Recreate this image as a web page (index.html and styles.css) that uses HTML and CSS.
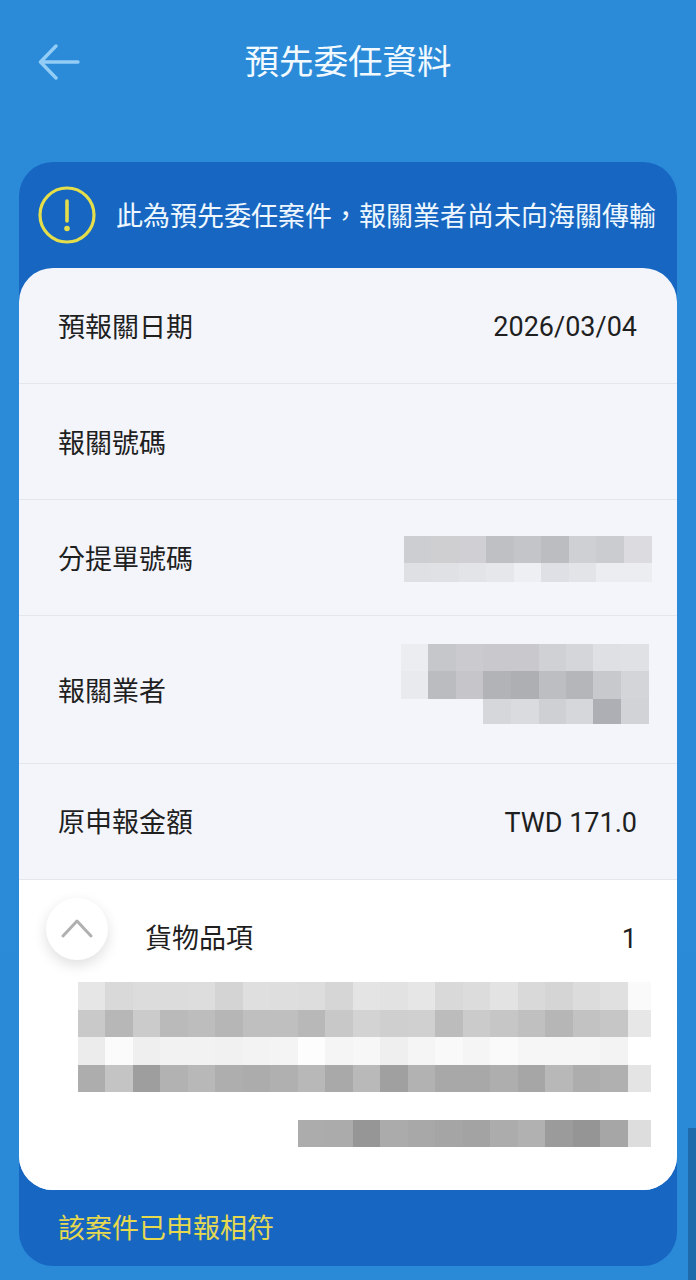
FILE: index.html
```html
<!DOCTYPE html>
<html lang="zh-Hant">
<head>
    <meta charset="UTF-8">
    <meta name="viewport" content="width=device-width, initial-scale=1.0">
    <title>預先委任資料</title>
    <link rel="stylesheet" href="styles.css">
</head>
<body>
    <header class="top-bar">
        <svg class="back-icon" width="42" height="36" viewBox="0 0 42 36" fill="none">
            <path d="M40 18H3M18 2 2.5 18 18 34" stroke="#93cdf6" stroke-width="3.4" stroke-linecap="round" stroke-linejoin="round"/>
        </svg>
        <h1 class="page-title">預先委任資料</h1>
    </header>

    <main class="case-card">
        <div class="notice">
            <svg class="notice-icon" width="58" height="58" viewBox="0 0 58 58" fill="none">
                <circle cx="29" cy="29" r="27" stroke="#e5de4b" stroke-width="3.2"/>
                <path d="M29 15v20" stroke="#e5de4b" stroke-width="3.6" stroke-linecap="round"/>
                <circle cx="29" cy="42.5" r="2.8" fill="#e5de4b"/>
            </svg>
            <p class="notice-text">此為預先委任案件，報關業者尚未向海關傳輸</p>
        </div>

        <section class="details">
            <div class="detail-row">
                <span>預報關日期</span>
                <span class="detail-value">2026/03/04</span>
            </div>
            <div class="detail-row">
                <span>報關號碼</span>
            </div>
            <div class="detail-row">
                <span>分提單號碼</span>
                <div class="mosaic mosaic-bill">
                    <div class="bill-1"></div>
                    <div class="bill-2"></div>
                </div>
            </div>
            <div class="detail-row detail-row-tall">
                <span>報關業者</span>
                <div class="mosaic mosaic-broker">
                    <div class="broker-1"></div>
                    <div class="broker-2"></div>
                    <div class="broker-3"></div>
                </div>
            </div>
            <div class="detail-row">
                <span class="amount-label">原申報金額</span>
                <span class="detail-value">TWD 171.0</span>
            </div>

            <div class="goods">
                <div class="goods-head">
                    <button class="collapse-btn" type="button" aria-label="收合">
                        <svg width="32" height="20" viewBox="0 0 32 20" fill="none">
                            <path d="M2 18 16 3l14 15" stroke="#b0b0b0" stroke-width="3" stroke-linecap="round" stroke-linejoin="round"/>
                        </svg>
                    </button>
                    <span class="goods-label">貨物品項</span>
                    <span class="goods-count">1</span>
                </div>
                <div class="mosaic mosaic-goods">
                    <div class="goods-1"></div>
                    <div class="goods-2"></div>
                    <div class="goods-3"></div>
                    <div class="goods-4"></div>
                    <div class="goods-gap"></div>
                    <div class="goods-5"></div>
                </div>
            </div>
        </section>

        <p class="status">該案件已申報相符</p>
    </main>

    <div class="edge-strip"></div>
</body>
</html>
```

FILE: styles.css
```css
* {
    margin: 0;
    padding: 0;
    box-sizing: border-box;
}

body {
    position: relative;
    height: 1280px;
    overflow: hidden;
    padding: 0 19px 14px;
    font-family: Roboto, "Noto Sans CJK TC", sans-serif;
    font-size: 27px;
    color: #1f1f1f;
    background: linear-gradient(180deg, #2b8bd9 0%, #2a8ad8 100%);
}

.top-bar {
    height: 124px;
    display: grid;
    grid-template-columns: 1fr auto 1fr;
    align-items: center;
    margin: 0 -19px;
    padding: 0 19px;
}

.back-icon {
    margin-left: 19px;
}

.page-title {
    font-size: 34.5px;
    font-weight: 400;
    line-height: 50px;
    color: #f2faff;
}

.case-card {
    margin-top: 38px;
    height: 1104px;
    border-radius: 34px;
    background: #1767c2;
    overflow: hidden;
}

.notice {
    height: 106px;
    display: flex;
    align-items: center;
    gap: 20px;
    padding: 0 0 0 19px;
}

.notice-icon {
    flex-shrink: 0;
}

.notice-text {
    margin-top: 3px;
    font-size: 27px;
    line-height: 40px;
    white-space: nowrap;
    color: #eef7ff;
}

.details {
    height: 922px;
    border-radius: 34px;
    background: #f3f5fb;
    overflow: hidden;
}

.detail-row {
    height: 116px;
    display: flex;
    align-items: center;
    justify-content: space-between;
    padding: 0 40px 0 39px;
    border-bottom: 1px solid #e3e6ed;
}

.detail-row-tall {
    height: 148px;
}

.detail-value {
    margin-top: 2px;
}

.amount-label {
    margin-bottom: 2px;
}

.mosaic {
    width: 248px;
}

.mosaic-bill {
    margin: 2px -15px 0 0;
}

.mosaic-broker {
    margin: -11px -12px 0 0;
}

.bill-1 {
    height: 27px;
    background: linear-gradient(90deg, #cdced2 27.5px, #cfcfd2 0 55px, #d0d0d4 0 82.5px, #bfc0c4 0 110px, #c4c5c9 0 137.5px, #bcbdc1 0 165px, #cfd0d4 0 192.5px, #cbccd0 0 220px, #dcdce0 0);
}

.bill-2 {
    height: 19px;
    background: linear-gradient(90deg, #dfe0e4 27.5px, #e0e1e4 0 55px, #e3e4e7 0 82.5px, #e6e7ea 0 110px, #eeeff2 0 137.5px, #dfe0e5 0 165px, #e3e4e8 0 192.5px, #ecedf0 0);
}

.broker-1 {
    height: 27px;
    background: linear-gradient(90deg, #ecedf0 27.5px, #c6c7cb 0 55px, #cbcbcf 0 82.5px, #c9c9cd 0 137.5px, #d0d1d5 0 165px, #d5d6da 0 192.5px, #dfe0e4 0 220px, #e0e1e5 0);
}

.broker-2 {
    height: 28px;
    background: linear-gradient(90deg, #e9eaee 27.5px, #bbbcc0 0 55px, #c6c6ca 0 82.5px, #b2b3b7 0 110px, #aeafb3 0 137.5px, #bdbec1 0 165px, #b5b6ba 0 192.5px, #c8c9cd 0 220px, #d4d5d9 0);
}

.broker-3 {
    height: 25px;
    background: linear-gradient(90deg, transparent 82.5px, #d6d7da 0 110px, #dadbde 0 137.5px, #cfd0d4 0 165px, #d6d7da 0 192.5px, #aeafb4 0 220px, #d2d3d7 0);
}

.goods {
    height: 310px;
    background: #fff;
}

.goods-head {
    height: 102px;
    display: flex;
    align-items: flex-start;
    padding: 18px 40px 0 27px;
}

.collapse-btn {
    width: 62px;
    height: 62px;
    flex-shrink: 0;
    display: flex;
    align-items: center;
    justify-content: center;
    padding-bottom: 2px;
    border: 0;
    border-radius: 50%;
    background: #fff;
    box-shadow: 0 5px 14px rgba(0, 0, 0, 0.13);
}

.goods-label {
    margin: 21px 0 0 37px;
    line-height: 40px;
}

.goods-count {
    margin: 21px 0 0 auto;
    line-height: 40px;
}

.mosaic-goods {
    width: 573px;
    margin-left: 59px;
}

.mosaic-goods div {
    height: 27.5px;
}

.goods-1 {
    background: linear-gradient(90deg, #e6e6e6 27.5px, #d9d9d9 0 55px, #dcdcdc 0 110px, #dddddd 0 137.5px, #d4d4d4 0 165px, #dfdfdf 0 192.5px, #dedede 0 220px, #dddddd 0 247.5px, #d6d6d6 0 275px, #e4e4e4 0 302.5px, #e2e2e2 0 330px, #e6e6e6 0 357.5px, #d9d9d9 0 385px, #dcdcdc 0 412.5px, #e3e3e3 0 440px, #d9d9d9 0 467.5px, #d5d5d5 0 495px, #dcdcdc 0 522.5px, #e0e0e0 0 550px, #fafafa 0);
}

.goods-2 {
    background: linear-gradient(90deg, #c9c9c9 27.5px, #b7b7b7 0 55px, #cbcbcb 0 82.5px, #bababa 0 110px, #bdbdbd 0 137.5px, #b6b6b6 0 165px, #bfbfbf 0 220px, #b8b8b8 0 247.5px, #c8c8c8 0 275px, #d3d3d3 0 302.5px, #cfcfcf 0 330px, #d0d0d0 0 357.5px, #bcbcbc 0 385px, #cbcbcb 0 412.5px, #c6c6c6 0 440px, #c0c0c0 0 467.5px, #b6b6b6 0 495px, #c2c2c2 0 522.5px, #c6c6c6 0 550px, #e7e7e7 0);
}

.goods-3 {
    background: linear-gradient(90deg, #ececec 27.5px, #fbfbfb 0 55px, #efefef 0 82.5px, #f2f2f2 0 137.5px, #f1f1f1 0 165px, #f3f3f3 0 192.5px, #f4f4f4 0 220px, #fdfdfd 0 247.5px, #f5f5f5 0 275px, #f7f7f7 0 302.5px, #efefef 0 330px, #f5f5f5 0 357.5px, #f9f9f9 0 385px, #f5f5f5 0 412.5px, #fafafa 0 440px, #f6f6f6 0 522.5px, #f3f3f3 0 550px, #ffffff 0);
}

.goods-4 {
    background: linear-gradient(90deg, #adadad 27.5px, #c4c4c4 0 55px, #9e9e9e 0 82.5px, #b2b2b2 0 110px, #b8b8b8 0 137.5px, #aeaeae 0 165px, #acacac 0 192.5px, #b0b0b0 0 220px, #b8b8b8 0 247.5px, #a9a9a9 0 275px, #b9b9b9 0 302.5px, #a0a0a0 0 330px, #b2b2b2 0 357.5px, #a8a8a8 0 412.5px, #aeaeae 0 440px, #a6a6a6 0 467.5px, #b8b8b8 0 495px, #adadad 0 522.5px, #b0b0b0 0 550px, #e4e4e4 0);
}

.goods-5 {
    background: linear-gradient(90deg, transparent 220px, #acacac 0 247.5px, #ababab 0 275px, #969696 0 302.5px, #ababab 0 330px, #a8a8a8 0 357.5px, #a5a5a5 0 385px, #a3a3a3 0 412.5px, #acacac 0 440px, #b1b1b1 0 467.5px, #9b9b9b 0 495px, #959595 0 522.5px, #a6a6a6 0 550px, #dddddd 0);
}

.status {
    height: 76px;
    padding: 0 39px;
    line-height: 79px;
    color: #e6d84f;
}

.edge-strip {
    position: absolute;
    right: 0;
    bottom: 0;
    width: 8px;
    height: 152px;
    background: #1f6aab;
}
```
